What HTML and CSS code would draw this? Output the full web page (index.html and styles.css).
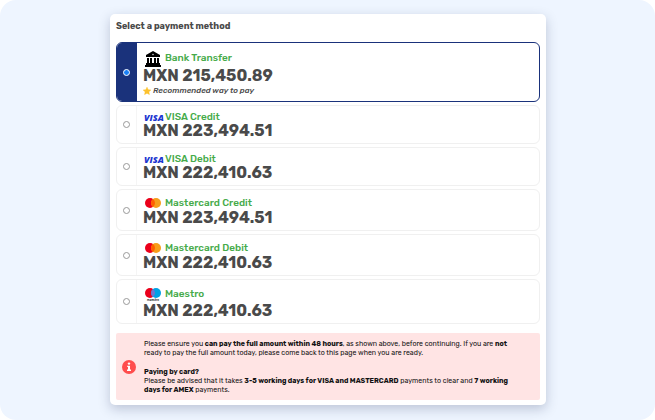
FILE: index.html
```html
<!DOCTYPE html>
<html lang="en">
<head>
    <meta charset="utf-8">
    <meta name="viewport" content="width=device-width, initial-scale=1">
    <title>Select a payment method</title>
    <link rel="stylesheet" href="styles.css">
</head>
<body>
<!-- Shared icons -->
<svg class="sprite" aria-hidden="true">
    <symbol id="mastercard" viewBox="0 0 16 10">
        <circle cx="5" cy="5" r="5" fill="#eb001b"/>
        <circle cx="11" cy="5" r="5" fill="#f79e1b"/>
        <path d="M8 1a5 5 0 0 1 0 8a5 5 0 0 1 0-8z" fill="#ff5f00"/>
    </symbol>
</svg>

<main class="page">
    <form class="card">
        <h1 class="title">Select a payment method</h1>

        <div class="options">
            <label class="option selected">
                <span class="pick"><input type="radio" name="method" value="bank" checked></span>
                <span class="details">
                    <span class="method bank">
                        <svg class="icon" width="16" height="16" viewBox="0 0 16 16">
                            <path d="M8 0L15 4V6H1V4zM2 7H4V12H2zM5 7H7V12H5zM9 7H11V12H9zM12 7H14V12H12zM1 12H15V14H1zM0 14H16V16H0z" fill="#000"/>
                            <circle cx="8" cy="3.500" r="0.700" fill="#fff"/>
                        </svg>
                        Bank Transfer
                    </span>
                    <span class="amount">MXN 215,450.89</span>
                    <span class="note">
                        <svg width="8" height="8" viewBox="0 0 16 16">
                            <path d="M8 0.500L10.300 5.400L15.700 6L11.700 9.700L12.800 15L8 12.400L3.200 15L4.300 9.700L0.300 6L5.700 5.400z" fill="#fdc22d" stroke="#fdc22d" stroke-linejoin="round"/>
                        </svg>
                        Recommended way to pay
                    </span>
                </span>
            </label>

            <label class="option">
                <span class="pick"><input type="radio" name="method" value="visa-credit"></span>
                <span class="details">
                    <span class="method visa">
                        <svg class="icon" width="22" height="11" viewBox="0 0 22 11">
                            <text x="1" y="9" class="visa-text">VISA</text>
                        </svg>
                        VISA Credit
                    </span>
                    <span class="amount">MXN 223,494.51</span>
                </span>
            </label>

            <label class="option">
                <span class="pick"><input type="radio" name="method" value="visa-debit"></span>
                <span class="details">
                    <span class="method visa">
                        <svg class="icon" width="22" height="11" viewBox="0 0 22 11">
                            <text x="1" y="9" class="visa-text">VISA</text>
                        </svg>
                        VISA Debit
                    </span>
                    <span class="amount">MXN 222,410.63</span>
                </span>
            </label>

            <label class="option">
                <span class="pick"><input type="radio" name="method" value="mc-credit"></span>
                <span class="details">
                    <span class="method mastercard">
                        <svg class="icon" width="16" height="10"><use href="#mastercard"/></svg>
                        Mastercard Credit
                    </span>
                    <span class="amount">MXN 223,494.51</span>
                </span>
            </label>

            <label class="option">
                <span class="pick"><input type="radio" name="method" value="mc-debit"></span>
                <span class="details">
                    <span class="method mastercard">
                        <svg class="icon" width="16" height="10"><use href="#mastercard"/></svg>
                        Mastercard Debit
                    </span>
                    <span class="amount">MXN 222,410.63</span>
                </span>
            </label>

            <label class="option">
                <span class="pick"><input type="radio" name="method" value="maestro"></span>
                <span class="details">
                    <span class="method maestro">
                        <svg class="icon" width="16" height="13" viewBox="0 0 16 13">
                            <circle cx="5" cy="5" r="5" fill="#eb001b"/>
                            <circle cx="11" cy="5" r="5" fill="#00a2e5"/>
                            <path d="M8 1a5 5 0 0 1 0 8a5 5 0 0 1 0-8z" fill="#7375cf"/>
                            <text x="8" y="12.500" text-anchor="middle" class="maestro-text">maestro</text>
                        </svg>
                        Maestro
                    </span>
                    <span class="amount">MXN 222,410.63</span>
                </span>
            </label>
        </div>

        <div class="alert">
            <svg class="info" width="14" height="14" viewBox="0 0 14 14">
                <circle cx="7" cy="7" r="7" fill="#ff4d4d"/>
                <circle cx="7" cy="3.600" r="1.200" fill="#fff"/>
                <path d="M5.200 5.800H8V9.600H9V11H5V9.600H6V7.100H5.200z" fill="#fff"/>
            </svg>
            <div class="alert-text">
                <p>Please ensure you <b>can pay the full amount within 48 hours</b>, as shown above, before continuing. If you are <b>not</b> ready to pay the full amount today, please come back to this page when you are ready.</p>
                <p><b>Paying by card?</b><br>
                Please be advised that it takes <b>3-5 working days for VISA and MASTERCARD</b> payments to clear and <b>7 working days for AMEX</b> payments.</p>
            </div>
        </div>
    </form>
</main>
</body>
</html>
```

FILE: styles.css
```css
* {
    box-sizing: border-box;
}

body {
    margin: 0;
    background-color: #fff;
    font-family: Rubik, Inter, sans-serif;
    color: #4a4a4a;
}

.sprite {
    position: absolute;
    width: 0;
    height: 0;
}

.page {
    min-height: 100vh;
    padding: 14px 109px 15px 110px;
    background-color: #eef5ff;
    border-radius: 16px;
}

.card {
    padding: 6px 6px 5px;
    background-color: #fff;
    border-radius: 5px;
    box-shadow: 0 4px 12px rgba(40, 50, 90, 0.25);
}

.title {
    margin: 0 0 9px;
    font-size: 9px;
    line-height: 13px;
    font-weight: 700;
}

.options {
    display: flex;
    flex-direction: column;
    gap: 3px;
}

.option {
    display: flex;
    border: 1px solid #f0f0f0;
    border-radius: 6px;
    overflow: hidden;
    cursor: pointer;
}

.option.selected {
    border-color: #1a327b;
}

.pick {
    display: flex;
    align-items: center;
    justify-content: center;
    width: 20px;
    border-right: 1px solid #f5f5f5;
}

.selected .pick {
    background-color: #1a327b;
    border-color: #1a327b;
}

.pick input {
    appearance: none;
    width: 7px;
    height: 7px;
    margin: 0;
    border: 1px solid #999;
    border-radius: 50%;
    background-color: #fff;
}

.pick input:checked {
    border-color: #fff;
    background-color: #1a80f5;
}

.details {
    display: flex;
    flex-direction: column;
    padding: 6px 6px 4px;
}

.method {
    display: flex;
    align-items: center;
    gap: 4px;
    padding-left: 2px;
    font-size: 10px;
    line-height: 11px;
    font-weight: 500;
    color: #46ab4a;
}

.method.bank {
    height: 19px;
}

.method.visa {
    height: 11px;
    gap: 0;
    padding-left: 0;
}

.method.mastercard {
    height: 14px;
}

.method.maestro {
    height: 17px;
}

.icon {
    flex: none;
}

.visa-text {
    font-family: "Open Sans", sans-serif;
    font-size: 9px;
    font-weight: 800;
    font-style: italic;
    fill: #1a35d0;
}

.maestro-text {
    font-size: 3px;
    font-weight: 500;
    fill: #222;
}

.amount {
    font-size: 16px;
    line-height: 16px;
    font-weight: 700;
}

.note {
    display: flex;
    align-items: center;
    gap: 2px;
    height: 13px;
    font-size: 8px;
    font-style: italic;
    font-weight: 500;
}

.alert {
    display: flex;
    align-items: center;
    gap: 8px;
    margin-top: 9px;
    padding: 6px 16px 6px 6px;
    background-color: #ffe4e4;
    border-radius: 2px;
    color: #111;
}

.info {
    flex: none;
}

.alert-text {
    font-size: 7px;
    line-height: 9px;
}

.alert-text p {
    margin: 0;
}

.alert-text p + p {
    margin-top: 10px;
}
```
